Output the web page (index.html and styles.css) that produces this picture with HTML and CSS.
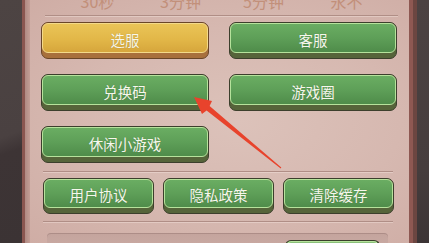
FILE: index.html
```html
<!DOCTYPE html>
<html lang="zh">
<head>
<meta charset="utf-8">
<title>设置</title>
<link rel="stylesheet" href="styles.css">
</head>
<body>
<div class="screen">
  <div class="side side-l"></div>
  <div class="rim rim-l"></div>
  <main class="panel">
    <div class="timers"><span>30秒</span><span>3分钟</span><span>5分钟</span><span>永不</span></div>
    <div class="rule rule-top"></div>
    <div class="grid">
      <button class="btn gold"><span class="face">选服</span></button>
      <button class="btn green"><span class="face">客服</span></button>
      <button class="btn green"><span class="face">兑换码</span></button>
      <button class="btn green"><span class="face">游戏圈</span></button>
      <button class="btn green"><span class="face">休闲小游戏</span></button>
    </div>
    <div class="rule rule-mid"></div>
    <div class="row3">
      <button class="btn green"><span class="face">用户协议</span></button>
      <button class="btn green"><span class="face">隐私政策</span></button>
      <button class="btn green"><span class="face">清除缓存</span></button>
    </div>
    <div class="rule rule-mid rule-low"></div>
    <div class="bottom-box"><span class="mini-btn"></span></div>
  </main>
  <div class="rim rim-r"></div>
  <div class="side side-r"></div>
  <svg class="arrow" width="429" height="243" viewBox="0 0 429 243">
    <polygon points="194,97 212,101 209.6,106 281.3,167.6 280.7,168.4 206.6,110.6 202,114" fill="#e8432c"/>
  </svg>
</div>
</body>
</html>
```
FILE: styles.css
```css
* { box-sizing: border-box; }
html, body { margin: 0; padding: 0; }
body {
  width: 429px;
  height: 243px;
  overflow: hidden;
  background: #463c3c;
  font-family: "Noto Sans CJK SC", "Noto Sans", sans-serif;
}
.screen {
  position: relative;
  display: flex;
  width: 429px;
  height: 243px;
}
.side-l {
  width: 22px;
  background: linear-gradient(160deg, #4d4443 0%, #4a4141 55%, #3d3435 62%, #3b3334 100%);
}
.rim-l {
  width: 8px;
  background: linear-gradient(to right, #8a5650 0, #8a5650 3px, #b08a83 3px, #c39e96 100%);
}
.panel {
  width: 379px;
  height: 243px;
  background: radial-gradient(ellipse at 55% 50%, #dcc2ba 0%, #d6b8b0 55%, #cfada5 100%);
  overflow: hidden;
}
.rim-r {
  width: 8px;
  background: linear-gradient(to right, #8e5852 0, #8e5852 4px, #6c4641 4px, #6c4641 100%);
}
.side-r {
  flex: 1;
  background: linear-gradient(180deg, #4c4242 0%, #463d3d 70%, #3c3435 100%);
}
.timers {
  display: flex;
  margin-top: -7px;
  height: 22px;
  padding-left: 26px;
}
.timers span {
  width: 83px;
  text-align: center;
  font-size: 16px;
  line-height: 16px;
  color: #c08a72;
  opacity: 0.85;
}
.rule {
  height: 1px;
  background: #b08e86;
  box-shadow: 0 1px 0 rgba(255, 240, 235, 0.35);
}
.rule-top { margin: 0 11px 0 15px; }
.rule-mid { margin: 8px 16px 0 13px; }
.rule-low { margin-top: 7px; }
.grid {
  display: grid;
  grid-template-columns: 168px 168px;
  grid-auto-rows: 37px;
  column-gap: 20px;
  row-gap: 15px;
  margin-top: 6px;
  padding-left: 11px;
}
.row3 {
  display: flex;
  gap: 9px;
  margin-top: 6px;
  padding-left: 13px;
  height: 36px;
}
.row3 .btn { width: 111px; }
.btn {
  display: block;
  height: 100%;
  padding: 0 0 5px 0;
  margin: 0;
  border-radius: 7px;
  font: inherit;
}
.face {
  display: flex;
  align-items: center;
  justify-content: center;
  height: 100%;
  border-radius: 6px;
  font-size: 14.5px;
  color: #f6f7ec;
  padding-top: 2px;
  text-shadow: 0 0 1px rgba(40, 60, 30, 0.35);
}
.green {
  border: 1px solid #3c3f2c;
  background: #56643a;
}
.green .face {
  border: 1.5px solid #b6e29c;
  background: linear-gradient(180deg, #6aad62 0%, #5e9f58 50%, #4f8c4a 100%);
}
.gold {
  border: 1px solid #6a4628;
  background: #a8703c;
}
.gold .face {
  border: 1.5px solid #f4da8a;
  background: linear-gradient(180deg, #eac457 0%, #e2b748 55%, #d6a63c 100%);
  color: #fbf6e6;
}
.bottom-box {
  display: flex;
  justify-content: flex-end;
  margin: 11px 21px 0 17px;
  height: 20px;
  padding: 7px 8px 0 0;
  border-radius: 4px;
  background: linear-gradient(180deg, #c4a49d 0%, #cbaca5 100%);
  box-shadow: inset 0 1px 0 rgba(120, 90, 85, 0.3);
}
.mini-btn {
  width: 95px;
  height: 14px;
  border: 1px solid #3c3f2c;
  border-bottom: none;
  border-radius: 6px 6px 0 0;
  background: #5f9e58;
  box-shadow: inset 0 1.5px 0 #b6e29c;
}
.arrow {
  position: absolute;
  left: 0;
  top: 0;
  pointer-events: none;
}
```
